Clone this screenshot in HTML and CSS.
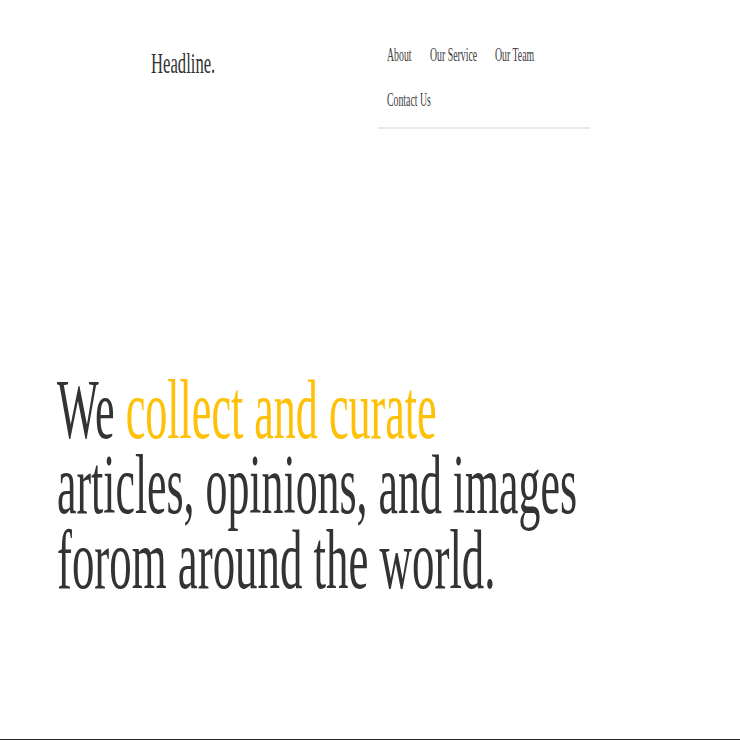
FILE: index.html
```html
<!DOCTYPE html>
<html lang="en">
<head>
<meta charset="utf-8">
<title>Headline.</title>
<link rel="stylesheet" href="styles.css">
</head>
<body>
<div class="page">
  <header class="site-header">
    <div class="logo"><span class="narrow narrow-logo">Headline.</span></div>
    <nav class="main-nav">
      <ul class="nav-list">
        <li class="nav-item"><a href="#" class="nav-link"><span class="narrow narrow-nav">About</span></a></li>
        <li class="nav-item"><a href="#" class="nav-link"><span class="narrow narrow-nav">Our Service</span></a></li>
        <li class="nav-item"><a href="#" class="nav-link"><span class="narrow narrow-nav">Our Team</span></a></li>
        <li class="nav-item"><a href="#" class="nav-link"><span class="narrow narrow-nav">Contact Us</span></a></li>
      </ul>
    </nav>
  </header>
  <main class="hero">
    <h1 class="hero-title">
      <span class="hero-line">We <span class="accent">collect and curate</span></span>
      <span class="hero-line hero-line-2">articles, opinions, and images</span>
      <span class="hero-line hero-line-3">forom around the world.</span>
    </h1>
  </main>
  <footer class="site-footer"></footer>
</div>
</body>
</html>
```
FILE: styles.css
```css
* { box-sizing: border-box; }
html, body { margin: 0; padding: 0; background: #fff; overflow: hidden; }
body {
  font-family: "Liberation Serif", "Times New Roman", serif;
  color: #333;
}
.page {
  height: 740px;
  display: flex;
  flex-direction: column;
}
.narrow {
  display: inline-block;
  white-space: nowrap;
  transform-origin: left center;
}
.site-header {
  display: flex;
  align-items: flex-start;
  padding: 33px 0 0 151px;
}
.logo {
  flex: 0 0 227px;
  margin-top: 8px;
  font-size: 30px;
  line-height: 44px;
  color: #333;
}
.narrow-logo { transform: scaleX(0.555); }
.main-nav { width: 212px; }
.nav-list {
  list-style: none;
  margin: 0;
  padding: 0 0 6px;
  border-bottom: 2px solid #e9e9e9;
  display: grid;
  grid-template-columns: 43px 65px 60px;
}
.nav-item {
  padding-left: 9px;
  font-size: 18px;
  line-height: 44px;
  height: 44px;
}
.nav-item:nth-child(4) { padding-top: 1px; }
.nav-link { color: #3d3d3d; text-decoration: none; }
.narrow-nav { transform: scaleX(0.545); }
.hero {
  flex: 1;
  padding: 243px 0 0 57px;
}
.hero-title {
  margin: 0;
  font-weight: normal;
  font-size: 84px;
  line-height: 75px;
  color: #333;
}
.hero-line {
  display: block;
  white-space: nowrap;
  transform: scaleX(0.525);
  transform-origin: left center;
}
.hero-line-2 { transform: scaleX(0.522); }
.hero-line-3 { transform: scaleX(0.534); }
.accent { color: #ffc107; }
.site-footer {
  height: 1px;
  background: #222;
}
```
